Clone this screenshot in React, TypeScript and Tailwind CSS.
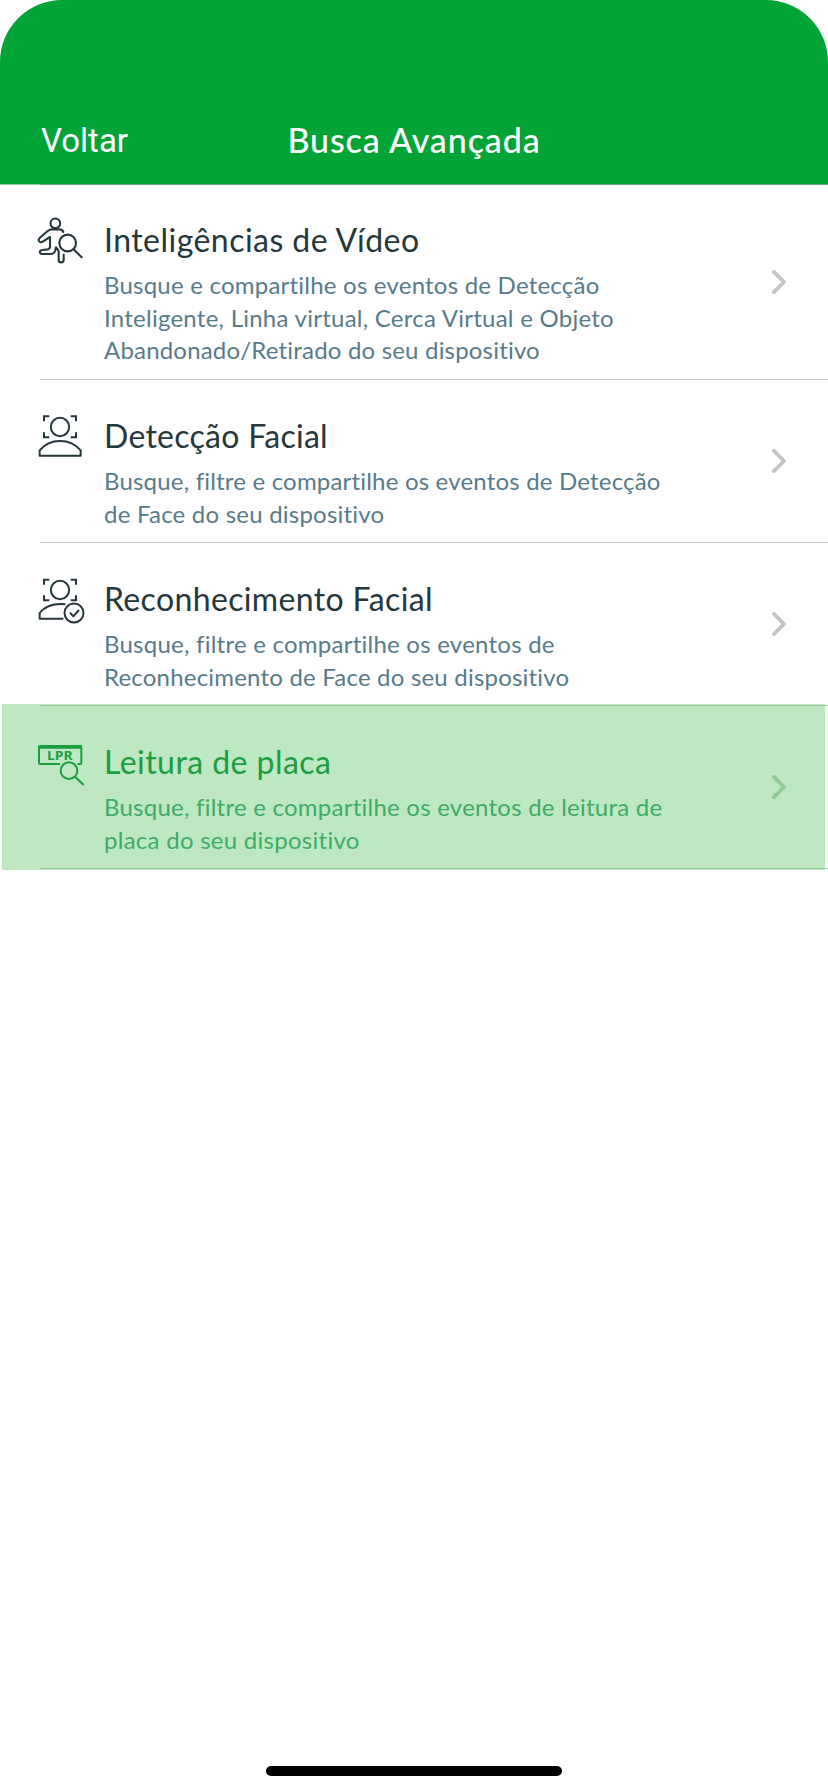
import type { ReactNode } from "react";

function VideoIcon() {
  return (
    <svg viewBox="0 0 240 240" className="h-20 w-20" fill="none" stroke="currentColor" strokeWidth="6.3" strokeLinecap="round" strokeLinejoin="round">
      <circle cx="88" cy="70" r="14.5" />
      <path d="M112 96c-2-5-6-8-12-8H78c-5 0-9 2-13 5L41 114c-7 7 1 16 9 11l22-14v29c0 4-3 7-7 8l-16 2c-11 2-9 12 0 12h25c8 0 12-4 14-11l2-9c2 4 8 6 8 14v23c0 11 15 11 15 0v-15" />
      <circle cx="125" cy="129" r="25" />
      <path d="M143 148l24 24" />
    </svg>
  );
}

function FaceIcon() {
  return (
    <svg viewBox="0 -12 240 240" className="h-20 w-20" fill="none" stroke="currentColor" strokeWidth="6" strokeLinejoin="round">
      <path d="M54 64V49h16M134 49h16v15M54 97v15h16M134 112h16V97" strokeLinejoin="miter" />
      <circle cx="102" cy="81" r="27.5" />
      <path d="M41 167v-16c14-17 36-28 61-28s48 11 62 28v16z" />
    </svg>
  );
}

function FaceCheckIcon() {
  return (
    <svg viewBox="0 -18 240 240" className="h-20 w-20" fill="none" stroke="currentColor" strokeWidth="6" strokeLinejoin="round">
      <path d="M54 59V44h16M134 44h16v15M54 91v15h16M134 106h16V91" strokeLinejoin="miter" />
      <circle cx="102" cy="75" r="27.5" />
      <path d="M118 118c-32-3-61 6-77 26v17h71" />
      <circle cx="144" cy="144" r="28.5" />
      <path d="M132 143l10 11 17-19" />
    </svg>
  );
}

function PlateIcon() {
  return (
    <svg viewBox="0 -24 240 240" className="h-20 w-20" fill="none" stroke="currentColor" strokeWidth="6">
      <path d="M102 102H43a4 4 0 0 1-4-4V52a4 4 0 0 1 4-4h119a4 4 0 0 1 4 4v46a4 4 0 0 1-4 4h-7" />
      <path d="M38 51h129" strokeWidth="11" />
      <text x="63" y="91" textLength="77" lengthAdjust="spacingAndGlyphs" fill="currentColor" stroke="none" className="font-['Open_Sans',sans-serif] text-[35px] font-bold">
        LPR
      </text>
      <circle cx="129" cy="122" r="25" />
      <path d="M147 140l26 25" strokeWidth="6.5" />
    </svg>
  );
}

type Line = { text: string; tracking: string };

type Item = {
  title: string;
  titleTracking: string;
  lines: Line[];
  icon: ReactNode;
  height: string;
  selected?: boolean;
};

const items: Item[] = [
  {
    title: "Inteligências de Vídeo",
    titleTracking: "tracking-[0.46px]",
    lines: [
      { text: "Busque e compartilhe os eventos de Detecção", tracking: "tracking-[0.22px]" },
      { text: "Inteligente, Linha virtual, Cerca Virtual e Objeto", tracking: "tracking-[0.25px]" },
      { text: "Abandonado/Retirado do seu dispositivo", tracking: "tracking-[0.19px]" },
    ],
    icon: <VideoIcon />,
    height: "h-[195px]",
  },
  {
    title: "Detecção Facial",
    titleTracking: "tracking-[0.27px]",
    lines: [
      { text: "Busque, filtre e compartilhe os eventos de Detecção", tracking: "tracking-[0.19px]" },
      { text: "de Face do seu dispositivo", tracking: "tracking-[0.22px]" },
    ],
    icon: <FaceIcon />,
    height: "h-[162px]",
  },
  {
    title: "Reconhecimento Facial",
    titleTracking: "tracking-[0.36px]",
    lines: [
      { text: "Busque, filtre e compartilhe os eventos de", tracking: "tracking-[0.24px]" },
      { text: "Reconhecimento de Face do seu dispositivo", tracking: "tracking-[0.2px]" },
    ],
    icon: <FaceCheckIcon />,
    height: "h-[162px]",
  },
  {
    title: "Leitura de placa",
    titleTracking: "tracking-[0.45px]",
    lines: [
      { text: "Busque, filtre e compartilhe os eventos de leitura de", tracking: "tracking-[0.24px]" },
      { text: "placa do seu dispositivo", tracking: "tracking-[0.27px]" },
    ],
    icon: <PlateIcon />,
    height: "h-[162px]",
    selected: true,
  },
];

function Row({ item }: { item: Item }) {
  const on = item.selected;
  return (
    <li className="relative">
      {on && (
        <div className="absolute -top-0.5 right-[3px] -bottom-px left-0.5 bg-[#bde8c1] pt-px pb-px pl-[38px]">
          <div className="h-full border-y border-[#8fcb96]" />
        </div>
      )}
      <div className={`relative flex pr-[42px] pl-[26px] ${item.height}`}>
        <div className={`w-[78px] shrink-0 pt-4 ${on ? "text-[#1c9d40]" : "text-[#25373b]"}`}>{item.icon}</div>
        <div className="flex-1 pt-[36px]">
          <h2 className={`text-[32px] leading-10 whitespace-nowrap ${item.titleTracking} ${on ? "text-[#1c9d40]" : "text-[#25373b]"}`}>
            {item.title}
          </h2>
          <p className={`pt-[9px] text-2xl leading-[32.5px] whitespace-nowrap ${on ? "text-[#40ab67]" : "text-[#587b8b]"}`}>
            {item.lines.map((line) => (
              <span key={line.text} className={`block ${line.tracking}`}>
                {line.text}
              </span>
            ))}
          </p>
        </div>
        <svg viewBox="0 0 14 24" className={`h-6 w-3.5 self-center ${on ? "text-[#8fcb96]" : "text-[#c4c4c4]"}`} fill="none" stroke="currentColor" strokeWidth="3.8" strokeLinecap="round" strokeLinejoin="round">
          <path d="M1.9 1.9 12 12 1.9 22.1" />
        </svg>
      </div>
      {!on && <div className="ml-10 h-px bg-[#c3c6c8]" />}
      {on && (
        <div className="flex h-px justify-end">
          <div className="w-[3px] bg-[#c3c6c8]" />
        </div>
      )}
    </li>
  );
}

export default function App() {
  return (
    <div className="flex h-[1792px] w-[828px] flex-col overflow-hidden bg-white font-['Lato',sans-serif]">
      <header className="grid h-[184px] shrink-0 grid-cols-[248px_1fr_248px] items-end rounded-t-[62px] bg-[#02a337] pb-[23px] text-white">
        <button className="pl-[41px] text-left font-['Roboto',sans-serif] text-[33px] leading-10">Voltar</button>
        <h1 className="pb-px text-center text-[34px] leading-10 font-medium tracking-[0.9px] whitespace-nowrap">Busca Avançada</h1>
      </header>
      <div className="flex h-px shrink-0">
        <div className="w-10 bg-[#8fd0a3]" />
        <div className="flex-1 bg-[#6fa582]" />
      </div>
      <ul className="-mt-px flex-1">
        {items.map((item) => (
          <Row key={item.title} item={item} />
        ))}
      </ul>
      <div className="mb-[6px] flex shrink-0 justify-center pb-[10px]">
        <div className="h-[10px] w-[296px] rounded-full bg-black" />
      </div>
    </div>
  );
}
